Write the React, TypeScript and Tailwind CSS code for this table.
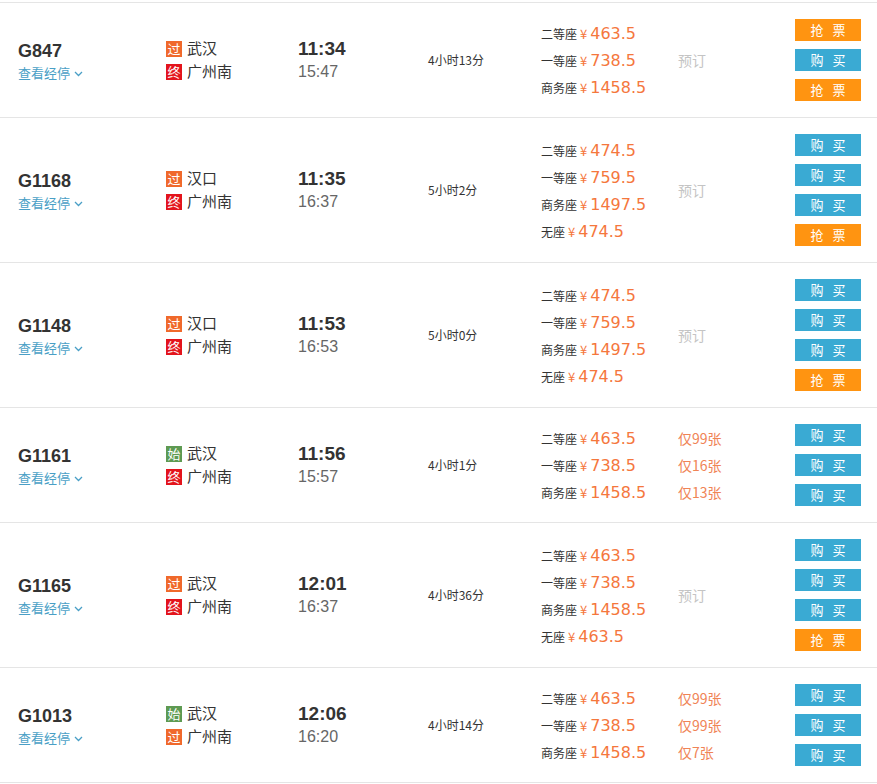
type Seat = { name: string; price: string };
type Train = {
  no: string;
  from: [string, string];
  to: [string, string];
  dep: string;
  arr: string;
  dur: string;
  seats: Seat[];
  status: string | string[];
  buttons: string[];
};

const std3 = (a: string, b: string, c: string): Seat[] => [
  { name: "二等座", price: a },
  { name: "一等座", price: b },
  { name: "商务座", price: c },
];

const trains: Train[] = [
  {
    no: "G847",
    from: ["过", "武汉"],
    to: ["终", "广州南"],
    dep: "11:34",
    arr: "15:47",
    dur: "4小时13分",
    seats: std3("463.5", "738.5", "1458.5"),
    status: "预订",
    buttons: ["抢票", "购买", "抢票"],
  },
  {
    no: "G1168",
    from: ["过", "汉口"],
    to: ["终", "广州南"],
    dep: "11:35",
    arr: "16:37",
    dur: "5小时2分",
    seats: [...std3("474.5", "759.5", "1497.5"), { name: "无座", price: "474.5" }],
    status: "预订",
    buttons: ["购买", "购买", "购买", "抢票"],
  },
  {
    no: "G1148",
    from: ["过", "汉口"],
    to: ["终", "广州南"],
    dep: "11:53",
    arr: "16:53",
    dur: "5小时0分",
    seats: [...std3("474.5", "759.5", "1497.5"), { name: "无座", price: "474.5" }],
    status: "预订",
    buttons: ["购买", "购买", "购买", "抢票"],
  },
  {
    no: "G1161",
    from: ["始", "武汉"],
    to: ["终", "广州南"],
    dep: "11:56",
    arr: "15:57",
    dur: "4小时1分",
    seats: std3("463.5", "738.5", "1458.5"),
    status: ["仅99张", "仅16张", "仅13张"],
    buttons: ["购买", "购买", "购买"],
  },
  {
    no: "G1165",
    from: ["过", "武汉"],
    to: ["终", "广州南"],
    dep: "12:01",
    arr: "16:37",
    dur: "4小时36分",
    seats: [...std3("463.5", "738.5", "1458.5"), { name: "无座", price: "463.5" }],
    status: "预订",
    buttons: ["购买", "购买", "购买", "抢票"],
  },
  {
    no: "G1013",
    from: ["始", "武汉"],
    to: ["过", "广州南"],
    dep: "12:06",
    arr: "16:20",
    dur: "4小时14分",
    seats: std3("463.5", "738.5", "1458.5"),
    status: ["仅99张", "仅99张", "仅7张"],
    buttons: ["购买", "购买", "购买"],
  },
];

const badgeColor: Record<string, string> = {
  过: "bg-[#f0692b]",
  终: "bg-[#e3141c]",
  始: "bg-[#5e9a52]",
};

function Station({ tag, name }: { tag: string; name: string }) {
  return (
    <div className="flex h-[23px] items-center">
      <span
        className={`flex h-4 w-4 items-center justify-center text-[13px] leading-none text-white ${badgeColor[tag]}`}
      >
        {tag}
      </span>
      <span className="ml-[5px] text-[15px] text-[#333]">{name}</span>
    </div>
  );
}

function Row({ t }: { t: Train }) {
  return (
    <div className="flex items-center border-t border-[#e5e5e5] py-3">
      <div className="mt-[3px] w-[166px] pl-[18px]">
        <div className="font-['Liberation_Sans',sans-serif] text-[18px] font-bold leading-[22px] text-[#333]">
          {t.no}
        </div>
        <div className="flex items-center text-[13px] leading-[22px] text-[#4a9fc6]">
          查看经停
          <svg width="9" height="6" viewBox="0 0 9 6" className="ml-[4px] mt-[2px]">
            <path d="M1 1l3.5 3.5L8 1" fill="none" stroke="#4a9fc6" strokeWidth="1.3" />
          </svg>
        </div>
      </div>
      <div className="w-[132px]">
        <Station tag={t.from[0]} name={t.from[1]} />
        <Station tag={t.to[0]} name={t.to[1]} />
      </div>
      <div className="w-[130px] font-['Liberation_Sans',sans-serif]">
        <div className="text-[19px] font-bold leading-[24px] text-[#333]">{t.dep}</div>
        <div className="text-[16px] leading-[22px] text-[#666]">{t.arr}</div>
      </div>
      <div className="w-[113px] text-[12px] text-[#333]">{t.dur}</div>
      <div className="mt-[2px] w-[137px]">
        {t.seats.map((s, i) => (
          <div key={i} className="flex h-[27px] items-center">
            <span className="text-[12px] text-[#333]">{s.name}</span>
            <span className="ml-[3px] text-[13px] text-[#f5773d]">¥</span>
            <span className="ml-[3px] font-['DejaVu_Sans',sans-serif] text-[16px] text-[#f5773d]">
              {s.price}
            </span>
          </div>
        ))}
      </div>
      <div className="w-[117px] text-[14px]">
        {typeof t.status === "string" ? (
          <div className="text-[#c4c4c4]">{t.status}</div>
        ) : (
          t.status.map((s, i) => (
            <div key={i} className="flex h-[27px] items-center text-[#f08456]">
              {s}
            </div>
          ))
        )}
      </div>
      <div className="w-[66px]">
        {t.buttons.map((b, i) => (
          <div key={i} className="flex h-[30px] items-center">
            <div
              className={`flex h-[22px] w-[66px] items-center justify-center gap-[9px] text-[13px] text-white ${
                b === "抢票" ? "bg-[#ff9411]" : "bg-[#3aaad3]"
              }`}
            >
              <span>{b[0]}</span>
              <span>{b[1]}</span>
            </div>
          </div>
        ))}
      </div>
    </div>
  );
}

export default function App() {
  return (
    <div className="min-h-[784px] w-[877px] bg-white pt-[2px] font-['Noto_Sans_CJK_SC',sans-serif]">
      <div className="border-b border-[#e5e5e5]">
        {trains.map((t) => (
          <Row key={t.no} t={t} />
        ))}
      </div>
    </div>
  );
}
